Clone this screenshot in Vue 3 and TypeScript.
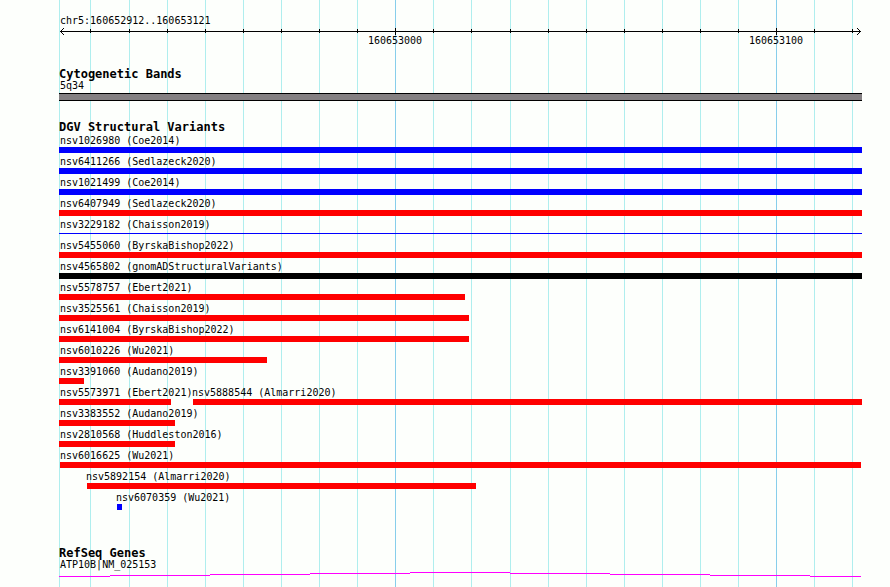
<script setup lang="ts">
interface Feature {
  name: string
  start: number
  end: number
  kind: 'gain' | 'loss' | 'complex' | 'insertion'
}

// All horizontal positions are in units of the drawn region's span.
const SPAN = 803
const pct = (value: number): string => `${(value / SPAN) * 100}%`

const gridLines = [
  0, 31, 70, 108, 146, 184, 222, 260, 298, 336, 374,
  412, 451, 489, 527, 565, 603, 641, 679, 717, 755, 793,
]
const majors: Record<number, string> = { 336: '160653000', 717: '160653100' }
const ticks = gridLines.slice(1)

const rows: Feature[][] = [
  [{ name: 'nsv1026980 (Coe2014)', start: 0, end: 803, kind: 'gain' }],
  [{ name: 'nsv6411266 (Sedlazeck2020)', start: 0, end: 803, kind: 'gain' }],
  [{ name: 'nsv1021499 (Coe2014)', start: 0, end: 803, kind: 'gain' }],
  [{ name: 'nsv6407949 (Sedlazeck2020)', start: 0, end: 803, kind: 'loss' }],
  [{ name: 'nsv3229182 (Chaisson2019)', start: 0, end: 803, kind: 'insertion' }],
  [{ name: 'nsv5455060 (ByrskaBishop2022)', start: 0, end: 803, kind: 'loss' }],
  [{ name: 'nsv4565802 (gnomADStructuralVariants)', start: 0, end: 803, kind: 'complex' }],
  [{ name: 'nsv5578757 (Ebert2021)', start: 0, end: 406, kind: 'loss' }],
  [{ name: 'nsv3525561 (Chaisson2019)', start: 0, end: 410, kind: 'loss' }],
  [{ name: 'nsv6141004 (ByrskaBishop2022)', start: 0, end: 410, kind: 'loss' }],
  [{ name: 'nsv6010226 (Wu2021)', start: 0, end: 208, kind: 'loss' }],
  [{ name: 'nsv3391060 (Audano2019)', start: 0, end: 25, kind: 'loss' }],
  [
    { name: 'nsv5573971 (Ebert2021)', start: 0, end: 112, kind: 'loss' },
    { name: 'nsv5888544 (Almarri2020)', start: 134, end: 803, kind: 'loss' },
  ],
  [{ name: 'nsv3383552 (Audano2019)', start: 0, end: 116, kind: 'loss' }],
  [{ name: 'nsv2810568 (Huddleston2016)', start: 0, end: 116, kind: 'loss' }],
  [{ name: 'nsv6016625 (Wu2021)', start: 1, end: 802, kind: 'loss' }],
  [{ name: 'nsv5892154 (Almarri2020)', start: 28, end: 417, kind: 'loss' }],
  [{ name: 'nsv6070359 (Wu2021)', start: 58, end: 63, kind: 'gain' }],
]

const labelStart = (f: Feature): string => pct(Math.max(f.start - 1, 1))

const intronSteps = [
  { x: 0, w: 51, y: 4 },
  { x: 51, w: 100, y: 3 },
  { x: 151, w: 100, y: 2 },
  { x: 251, w: 100, y: 1 },
  { x: 351, w: 100, y: 0 },
  { x: 451, w: 100, y: 1 },
  { x: 551, w: 100, y: 2 },
  { x: 651, w: 100, y: 3 },
  { x: 751, w: 51, y: 4 },
]
</script>

<template>
  <main class="browser">
    <div class="panel">
      <div class="grid" aria-hidden="true">
        <i
          v-for="x in gridLines"
          :key="x"
          class="grid-line"
          :class="{ major: x in majors }"
          :style="{ left: pct(x) }"
        ></i>
      </div>

      <header class="ruler">
        <div class="label">chr5:160652912..160653121</div>
        <div class="scale">
          <svg class="arrow" viewBox="0 0 4 7" aria-hidden="true">
            <path d="M0 3h1v1H0zM1 2h1v1H1zM1 4h1v1H1zM2 1h1v1H2zM2 5h1v1H2zM3 0h1v1H3zM3 6h1v1H3z" />
          </svg>
          <svg class="arrow right" viewBox="0 0 4 7" aria-hidden="true">
            <path d="M3 3h1v1H3zM2 2h1v1H2zM2 4h1v1H2zM1 1h1v1H1zM1 5h1v1H1zM0 0h1v1H0zM0 6h1v1H0z" />
          </svg>
          <i
            v-for="x in ticks"
            :key="x"
            class="tick"
            :class="{ major: x in majors }"
            :style="{ left: pct(x) }"
          ></i>
        </div>
        <div class="positions">
          <span v-for="(text, x) in majors" :key="x" class="position" :style="{ left: pct(Number(x)) }">{{ text }}</span>
        </div>
      </header>

      <section class="track">
        <h2>Cytogenetic Bands</h2>
        <div class="label">5q34</div>
        <div class="band"></div>
      </section>

      <section class="track">
        <h2>DGV Structural Variants</h2>
        <div v-for="(row, i) in rows" :key="i" class="row">
          <template v-for="f in row" :key="f.name">
            <span class="name" :style="{ marginLeft: labelStart(f) }">{{ f.name }}</span>
            <span class="lane">
              <i
                class="bar"
                :class="f.kind"
                :style="{ marginLeft: pct(f.start), width: pct(f.end - f.start) }"
              ></i>
            </span>
          </template>
        </div>
      </section>

      <section class="track genes">
        <h2>RefSeq Genes</h2>
        <div class="label">ATP10B|NM_025153</div>
        <svg class="intron" viewBox="0 0 803 5" preserveAspectRatio="none" aria-hidden="true">
          <rect v-for="s in intronSteps" :key="s.x" :x="s.x" :y="s.y" :width="s.w" height="1" />
        </svg>
      </section>
    </div>
  </main>
</template>

<style>
body {
  background: #fdfffc;
}
</style>

<style scoped>
.browser {
  min-height: 100vh;
  box-sizing: border-box;
  padding: 0 28px 0 59px;
  display: flex;
  color: #000;
  font-family: "DejaVu Sans Mono", "Liberation Mono", monospace;
  font-size: 10px;
  line-height: 14px;
  white-space: nowrap;
}

.panel {
  position: relative;
  flex: 1;
  min-width: 0;
  display: flex;
  flex-direction: column;
  gap: 22px;
  padding-top: 14px;
}

.grid {
  position: absolute;
  inset: 0;
}

.grid-line {
  position: absolute;
  top: 0;
  bottom: 0;
  width: 1px;
  background: #afeeee;
}

.grid-line.major {
  background: #87ceeb;
}

.ruler,
.track {
  position: relative;
}

.label {
  padding-left: 1px;
}

.scale {
  position: relative;
  height: 7px;
  padding: 0 1px;
  background: linear-gradient(#000, #000) 0 3px / 100% 1px no-repeat content-box;
  display: flex;
  justify-content: space-between;
}

.arrow {
  width: 4px;
  height: 7px;
  shape-rendering: crispEdges;
}

.tick {
  position: absolute;
  top: 1px;
  width: 1px;
  height: 4px;
  background: #000;
}

.tick.major {
  top: 0;
  height: 7px;
}

.positions {
  position: relative;
  height: 13px;
}

.position {
  position: absolute;
  top: -1px;
  transform: translateX(-50%);
}

h2 {
  margin: 0;
  font-size: 12px;
  line-height: 9px;
  font-weight: 700;
}

.band {
  height: 6px;
  border: solid #000;
  border-width: 1px 0;
  background: #848082;
}

.row {
  display: grid;
  grid-template-columns: 100%;
  grid-template-rows: 15px 6px;
}

.name {
  grid-area: 1 / 1;
  line-height: 17px;
}

.lane {
  grid-area: 2 / 1;
  display: flex;
}

.bar {
  height: 6px;
}

.gain {
  background: #0000ff;
}

.loss {
  background: #ff0000;
}

.complex {
  background: #000;
}

.insertion {
  height: 1px;
  margin-top: 2px;
  background: #0000ff;
}

.genes {
  padding-top: 17px;
}

.intron {
  display: block;
  width: 100%;
  height: 5px;
  fill: #ff00ff;
  shape-rendering: crispEdges;
}
</style>
